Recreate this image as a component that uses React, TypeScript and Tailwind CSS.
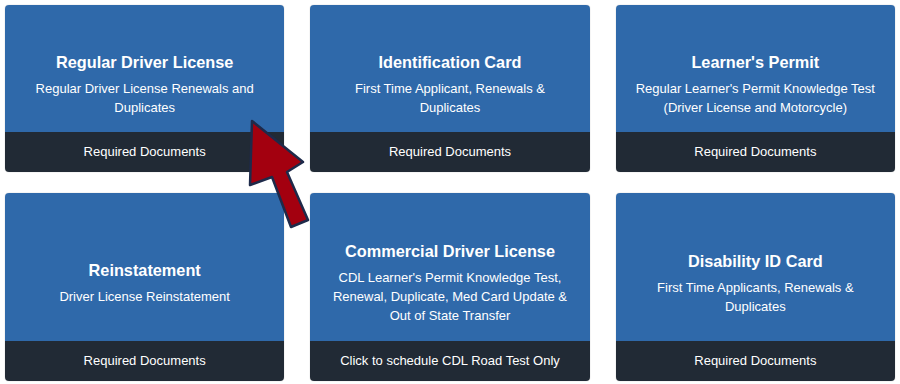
import React from 'react';

interface Service {
  title: string;
  lines: string[];
  footer: string;
}

const services: Service[] = [
  { title: 'Regular Driver License', lines: ['Regular Driver License Renewals and', 'Duplicates'], footer: 'Required Documents' },
  { title: 'Identification Card', lines: ['First Time Applicant, Renewals &', 'Duplicates'], footer: 'Required Documents' },
  { title: "Learner's Permit", lines: ["Regular Learner's Permit Knowledge Test", '(Driver License and Motorcycle)'], footer: 'Required Documents' },
  { title: 'Reinstatement', lines: ['Driver License Reinstatement'], footer: 'Required Documents' },
  {
    title: 'Commercial Driver License',
    lines: ["CDL Learner's Permit Knowledge Test,", 'Renewal, Duplicate, Med Card Update &', 'Out of State Transfer'],
    footer: 'Click to schedule CDL Road Test Only',
  },
  { title: 'Disability ID Card', lines: ['First Time Applicants, Renewals &', 'Duplicates'], footer: 'Required Documents' },
];

const ServiceCard: React.FC<{ s: Service }> = ({ s }) => (
  <div className="flex flex-col rounded-[4px] overflow-hidden shadow-[0_0_1px_rgba(0,0,0,0.4)]">
    <div className="flex-1 flex flex-col justify-center items-center text-center bg-[#2f69aa] text-white pt-[45px] pb-[15px]">
      <h3 className="text-[16.3px] font-bold leading-[24px]">{s.title}</h3>
      <div className="mt-[5px] text-[13px] leading-[19px]">
        {s.lines.map((l, i) => (
          <p key={i}>{l}</p>
        ))}
      </div>
    </div>
    <div className="h-[40px] flex items-center justify-center bg-[#212a35] text-white text-[13px]">
      {s.footer}
    </div>
  </div>
);

const App: React.FC = () => {
  return (
    <div className="relative w-[900px] h-[384px] bg-white overflow-hidden" style={{ fontFamily: '"Liberation Sans", Arial, sans-serif' }}>
      <div className="grid grid-cols-3 grid-rows-[auto_188px] gap-x-[26px] gap-y-[21px] px-[5px] pt-[5px]">
        {services.map(s => (
          <ServiceCard key={s.title} s={s} />
        ))}
      </div>

      {/* pointer arrow */}
      <svg className="absolute left-0 top-0 pointer-events-none" width="900" height="384" viewBox="0 0 900 384">
        <polygon
          points="252,121 303,162 287,172 308,220 291,227 272,177 250,185"
          fill="#a3000f"
          stroke="#1e2a4a"
          strokeWidth="2.5"
          strokeLinejoin="round"
        />
      </svg>
    </div>
  );
};

export default App;
